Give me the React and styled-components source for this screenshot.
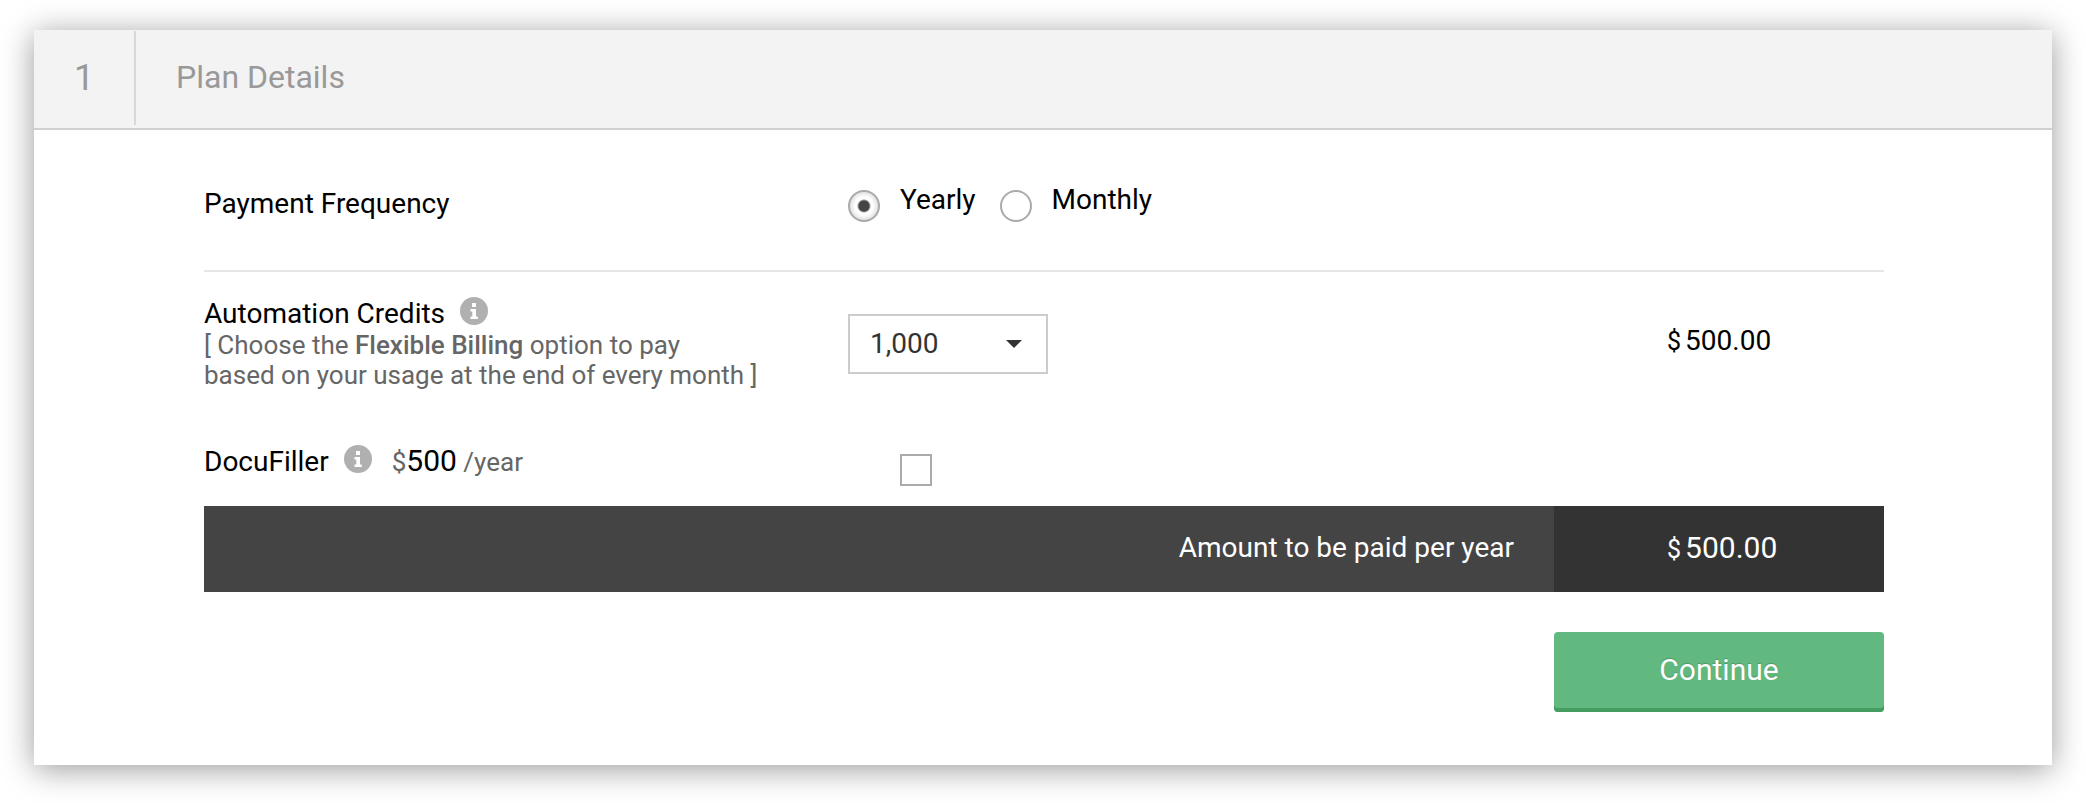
import React, { useState } from "react";
import styled, { createGlobalStyle } from "styled-components";

const YEARLY_RATE = 500;

const creditOptions = [1000, 2000, 5000, 10000];

const formatAmount = (value) =>
	value.toLocaleString("en-US", {
		minimumFractionDigits: 2,
		maximumFractionDigits: 2,
	});

function InfoIcon() {
	return (
		<InfoSvg viewBox="0 0 28 28" aria-hidden="true">
			<circle cx="14" cy="14" r="14" fill="#b0b0b0" />
			<path
				d="M12 6h4v4h-4zM10.5 12H16v7.5h1.8V22h-7.3v-2.5h1.8v-5h-1.8z"
				fill="#fff"
			/>
		</InfoSvg>
	);
}

export default function App() {
	const [frequency, setFrequency] = useState("year");
	const [credits, setCredits] = useState(1000);
	const [docuFiller, setDocuFiller] = useState(false);

	const perYear = (credits / 1000) * YEARLY_RATE;
	const divider = frequency === "year" ? 1 : 12;
	const creditsPrice = perYear / divider;
	const total = (perYear + (docuFiller ? YEARLY_RATE : 0)) / divider;

	return (
		<>
			<GlobalStyle />
			<Card>
				<Header>
					<StepNumber>1</StepNumber>
					<StepTitle>Plan Details</StepTitle>
				</Header>
				<Body>
					<FrequencyRow>
						<Title id="frequency">Payment Frequency</Title>
						<RadioGroup role="radiogroup" aria-labelledby="frequency">
							<RadioLabel>
								<Radio
									type="radio"
									name="frequency"
									value="year"
									checked={frequency === "year"}
									onChange={() => setFrequency("year")}
								/>
								<span>Yearly</span>
							</RadioLabel>
							<RadioLabel>
								<Radio
									type="radio"
									name="frequency"
									value="month"
									checked={frequency === "month"}
									onChange={() => setFrequency("month")}
								/>
								<span>Monthly</span>
							</RadioLabel>
						</RadioGroup>
					</FrequencyRow>

					<CreditsRow>
						<div>
							<Title>
								<label htmlFor="credits">Automation Credits</label>
								<InfoButton type="button" aria-label="About automation credits">
									<InfoIcon />
								</InfoButton>
							</Title>
							<Note>
								[ Choose the <strong>Flexible Billing</strong> option to pay
								<br />
								based on your usage at the end of every month ]
							</Note>
						</div>
						<SelectWrapper>
							<Select
								id="credits"
								value={credits}
								onChange={(e) => setCredits(Number(e.target.value))}
							>
								{creditOptions.map((option) => (
									<option key={option} value={option}>
										{option.toLocaleString("en-US")}
									</option>
								))}
							</Select>
							<Caret viewBox="0 0 16 8" aria-hidden="true">
								<path d="M0 0h16L8 8z" fill="#333" />
							</Caret>
						</SelectWrapper>
						<Price>
							<Currency>$</Currency>
							{formatAmount(creditsPrice)}
						</Price>
					</CreditsRow>

					<AddonRow>
						<Title>
							<label htmlFor="docufiller">DocuFiller</label>
							<InfoButton type="button" aria-label="About DocuFiller">
								<InfoIcon />
							</InfoButton>
							<Rate>
								$<b>{YEARLY_RATE}</b> /year
							</Rate>
						</Title>
						<Checkbox
							type="checkbox"
							id="docufiller"
							checked={docuFiller}
							onChange={(e) => setDocuFiller(e.target.checked)}
						/>
					</AddonRow>

					<TotalBar>
						<TotalLabel>Amount to be paid per {frequency}</TotalLabel>
						<TotalAmount>
							<Currency>$</Currency>
							{formatAmount(total)}
						</TotalAmount>
					</TotalBar>
					<ContinueButton type="button">Continue</ContinueButton>
				</Body>
			</Card>
		</>
	);
}

const GlobalStyle = createGlobalStyle`
	* {
		box-sizing: border-box;
	}
	body {
		margin: 0;
		background: #fff;
		color: #000;
		font-family: Roboto, "Liberation Sans", sans-serif;
		font-size: 28px;
	}
	button,
	input,
	select {
		margin: 0;
		font-family: inherit;
	}
`;

const Card = styled.main`
	margin: 30px 34px 38px;
	background: #fff;
	box-shadow: 0 4px 30px rgba(0, 0, 0, 0.4);
`;

const Header = styled.header`
	display: flex;
	height: 100px;
	padding: 1px 0 3px;
	background: #f3f3f3;
	border-bottom: 2px solid #d0d0d0;
	color: #999;
	line-height: 94px;
`;

const StepNumber = styled.span`
	width: 102px;
	border-right: 2px solid #d8d8d8;
	font-size: 36px;
	text-align: center;
`;

const StepTitle = styled.h1`
	margin: 0;
	padding-left: 40px;
	font-size: 32px;
	font-weight: 400;
	line-height: 92px;
`;

const Body = styled.section`
	display: flex;
	flex-direction: column;
	padding: 0 168px 53px 170px;
`;

const Row = styled.div`
	display: grid;
	grid-template-columns: 644fr 706fr 330px;
	align-items: start;
`;

const FrequencyRow = styled(Row)`
	padding: 56px 0 48px;
	border-bottom: 2px solid #e6e6e6;
`;

const CreditsRow = styled(Row)`
	padding-top: 24px;
`;

const AddonRow = styled(Row)`
	padding: 54px 0 20px;
`;

const Title = styled.div`
	display: flex;
	align-items: center;
	line-height: 36px;
`;

const InfoButton = styled.button`
	display: flex;
	margin: 0 20px 6px 15px;
	padding: 0;
	border: none;
	border-radius: 50%;
	background: none;
	cursor: pointer;
`;

const InfoSvg = styled.svg`
	width: 28px;
	height: 28px;
`;

const Note = styled.p`
	margin: -2px 0 0;
	color: #666;
	font-size: 26px;
	line-height: 30px;
	strong {
		font-weight: 500;
	}
`;

const Rate = styled.span`
	color: #666;
	font-size: 26px;
	b {
		color: #000;
		font-size: 30px;
		font-weight: 400;
		line-height: 30px;
	}
`;

const RadioGroup = styled.div`
	display: flex;
	gap: 24px;
`;

const RadioLabel = styled.label`
	display: flex;
	gap: 20px;
	line-height: 28px;
`;

const Radio = styled.input`
	appearance: none;
	width: 32px;
	height: 32px;
	margin-top: 4px;
	border: 2px solid #aaa;
	border-radius: 50%;
	background: #fff;
	&:checked {
		background: radial-gradient(circle, #444 5px, #fff 7px, #fff 9px, #ddd 15px);
	}
`;

const SelectWrapper = styled.div`
	position: relative;
	width: 200px;
	margin-top: 18px;
`;

const Select = styled.select`
	appearance: none;
	display: block;
	width: 100%;
	height: 60px;
	padding: 0 48px 2px 20px;
	border: 2px solid #ccc;
	border-radius: 0;
	background: #fff;
	color: #333;
	font-size: 28px;
`;

/* sits over the select */
const Caret = styled.svg`
	position: absolute;
	top: 26px;
	right: 26px;
	width: 16px;
	height: 8px;
	pointer-events: none;
`;

const Price = styled.div`
	padding-left: 113px;
	line-height: 90px;
`;

const Currency = styled.span`
	margin-right: 4px;
	font-size: 25px;
	line-height: 30px;
`;

const Checkbox = styled.input`
	appearance: none;
	width: 32px;
	height: 32px;
	margin: 10px 0 0 52px;
	border: 2px solid #aaa;
	background: #fff;
	&:checked {
		background: #444;
		box-shadow: inset 0 0 0 5px #fff;
	}
`;

const TotalBar = styled.div`
	display: flex;
	background: #444;
	color: #fff;
	line-height: 84px;
`;

const TotalLabel = styled.span`
	flex: 1;
	padding: 0 40px 2px 0;
	text-align: right;
`;

const TotalAmount = styled.span`
	width: 330px;
	padding: 0 0 2px 113px;
	background: #333;
	font-size: 30px;
`;

const ContinueButton = styled.button`
	align-self: flex-end;
	width: 330px;
	height: 80px;
	margin-top: 40px;
	padding: 0 0 6px;
	border: none;
	border-radius: 4px;
	background: #62b97f;
	box-shadow: inset 0 -4px #469d60;
	color: #fff;
	font-size: 30px;
	text-shadow: 0 -1px 1px rgba(0, 0, 0, 0.2);
	cursor: pointer;
`;
